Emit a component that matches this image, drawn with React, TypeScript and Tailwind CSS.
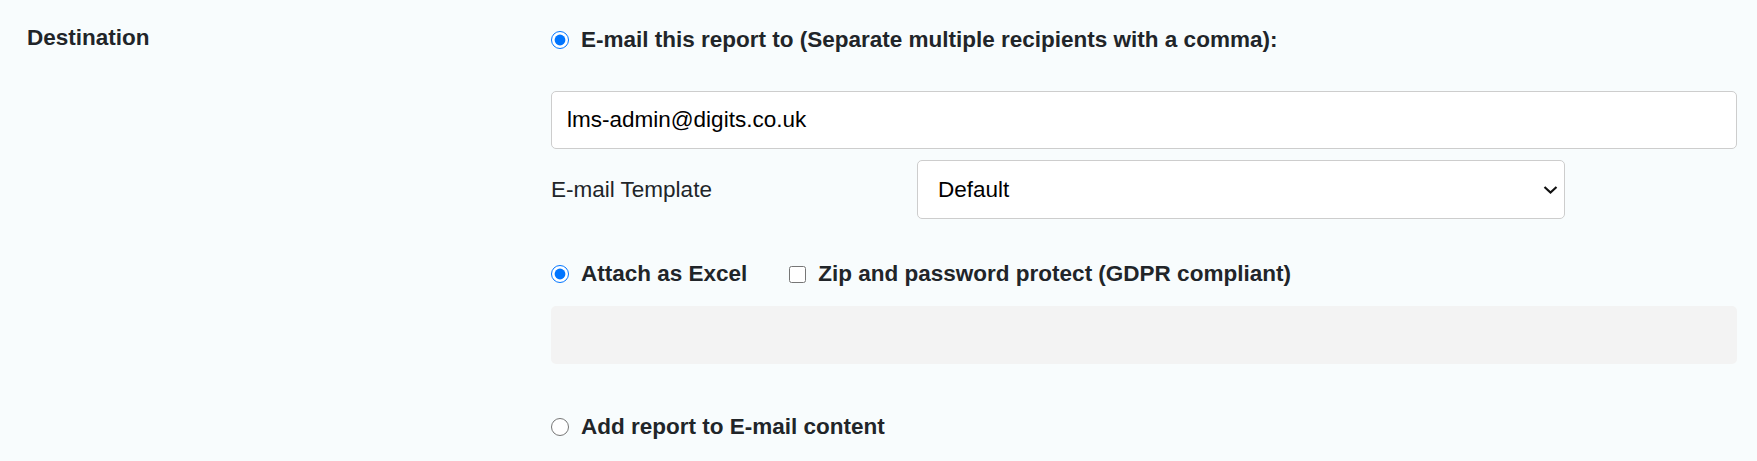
import React from "react"

const font = { fontFamily: '"Liberation Sans", Arial, sans-serif' }

function Chevron() {
  return (
    <svg
      width="15"
      height="9"
      viewBox="0 0 15 9"
      className="pointer-events-none absolute right-[7px] top-1/2 -translate-y-1/2"
    >
      <path d="M1.5 1.5 L7.5 7 L13.5 1.5" fill="none" stroke="#111" strokeWidth="2.2" />
    </svg>
  )
}

export default function App() {
  return (
    <div
      style={font}
      className="flex min-h-[461px] w-full bg-[#f8fcfd] text-[22.5px] text-[#212529]"
    >
      <div className="w-[551px] shrink-0 pl-[27px] pt-[23px]">
        <div className="flex h-[30px] items-center font-bold">Destination</div>
      </div>

      <div className="flex min-w-0 flex-1 flex-col pr-[20px] pt-[25px]">
        <label className="flex h-[30px] items-center gap-[12px] font-bold">
          <input type="radio" name="dest" defaultChecked className="m-0 h-[18px] w-[18px] shrink-0" />
          <span>E-mail this report to (Separate multiple recipients with a comma):</span>
        </label>

        <input
          type="text"
          defaultValue="lms-admin@digits.co.uk"
          className="mt-[36px] h-[58px] w-full rounded-[5px] border border-[#cdcdcd] bg-white px-[15px] text-black outline-none"
        />

        <div className="mt-[11px] flex items-center">
          <div className="w-[366px] shrink-0">E-mail Template</div>
          <div className="relative w-[648px]">
            <select className="h-[59px] w-full appearance-none rounded-[5px] border border-[#cdcdcd] bg-white px-[20px] text-black outline-none">
              <option>Default</option>
            </select>
            <Chevron />
          </div>
        </div>

        <div className="mt-[40px] flex h-[30px] items-center font-bold">
          <label className="flex items-center gap-[12px]">
            <input type="radio" name="fmt" defaultChecked className="m-0 h-[18px] w-[18px] shrink-0" />
            <span>Attach as Excel</span>
          </label>
          <label className="ml-[42px] flex items-center gap-[12px]">
            <input type="checkbox" className="m-0 h-[17px] w-[17px] shrink-0" />
            <span>Zip and password protect (GDPR compliant)</span>
          </label>
        </div>

        <div className="mt-[17px] h-[58px] w-full rounded-[5px] bg-[#f3f3f3]" />

        <label className="mt-[48px] flex h-[30px] items-center gap-[12px] font-bold">
          <input type="radio" name="dest" className="m-0 h-[18px] w-[18px] shrink-0" />
          <span>Add report to E-mail content</span>
        </label>
      </div>
    </div>
  )
}
